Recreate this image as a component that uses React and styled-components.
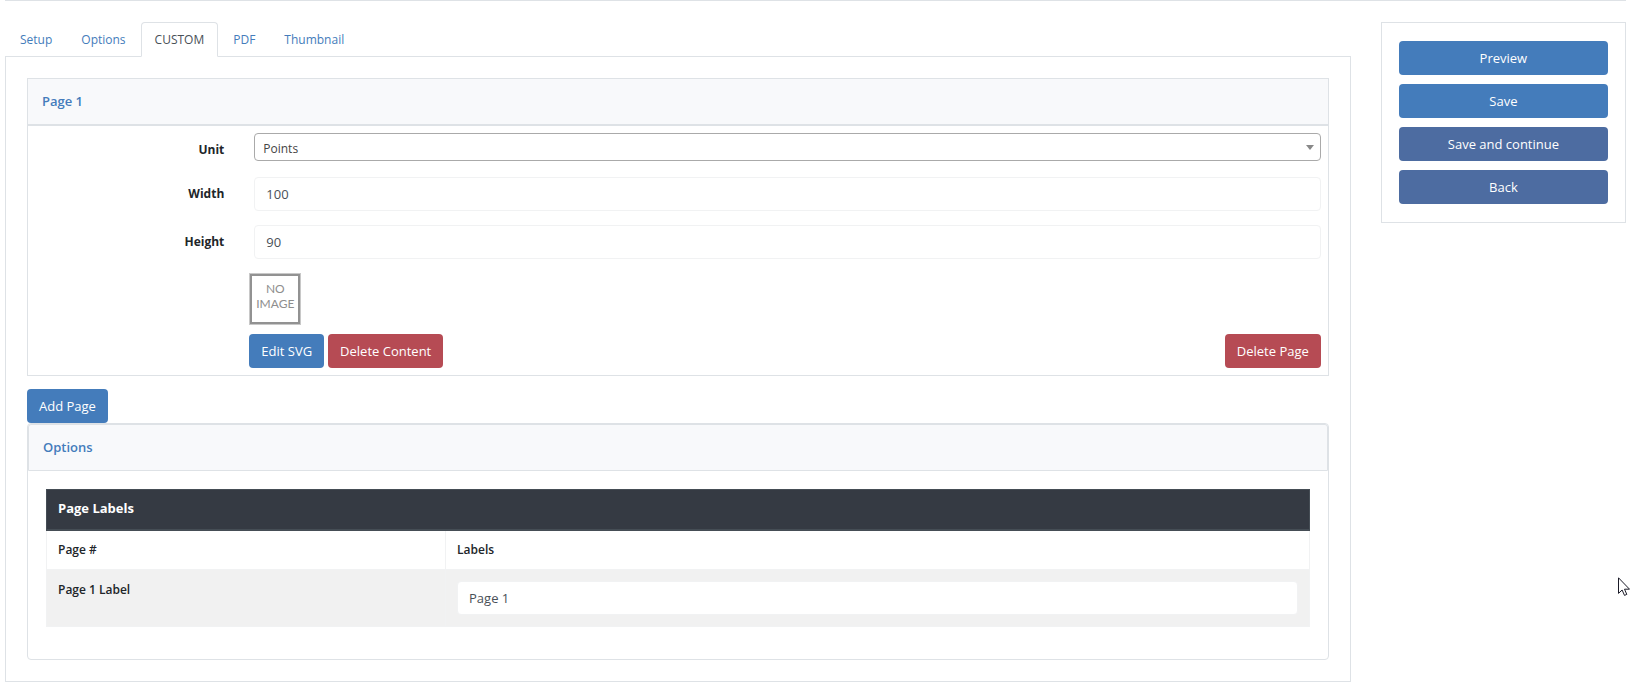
import React, { useState } from "react";
import styled, { createGlobalStyle, css } from "styled-components";

const colors = {
  line: "#dee2e6",
  faint: "#f1f2f3",
  blue: "#447cbb",
  indigo: "#4d6ca1",
  red: "#b64b54",
  ink: "#212529",
};

const GlobalStyle = createGlobalStyle`
  *, *::before, *::after { box-sizing: border-box; }
  body {
    margin: 0;
    background: #fff;
    color: ${colors.ink};
    font-family: "Segoe UI", "Open Sans", "Noto Sans", sans-serif;
    font-size: 12px;
    line-height: 18px;
  }
`;

const Page = styled.div`
  padding: 0 7px 5px 5px;
  overflow-x: hidden;
`;

const Divider = styled.hr`
  margin: 0 0 21px;
  border: 0;
  border-top: 1px solid ${colors.line};
`;

const Columns = styled.div`
  display: flex;
  align-items: flex-start;
  margin: 0 -15px;
`;

const Main = styled.main`
  flex: 0 0 83.3333%;
  min-width: 0;
  padding: 0 15px;
`;

const Side = styled.aside`
  flex: 0 0 16.6667%;
  min-width: 0;
  padding: 0 15px;
`;

const Tabs = styled.nav`
  display: flex;
  gap: 1px;
  height: 34px;
  padding-left: 1px;
`;

const Tab = styled.a`
  padding: 8px 13px 7px;
  border: 1px solid transparent;
  border-radius: 4px 4px 0 0;
  color: ${colors.blue};
  text-decoration: none;
  ${(p) =>
    p.$active &&
    css`
      margin-bottom: -1px;
      z-index: 1;
      border-color: ${colors.line};
      border-bottom-color: #fff;
      background: #fff;
      color: #495057;
    `}
`;

const TabPanel = styled.div`
  padding: 21px;
  border: 1px solid ${colors.line};
`;

const Card = styled.section`
  border: 1px solid ${colors.line};
  border-radius: ${(p) => (p.$rounded ? "4px" : "0")};
`;

const CardTitle = styled.h2`
  margin: 0;
  padding: 13px 14px 14px;
  border: 0 solid ${colors.line};
  border-width: ${(p) => (p.$boxed ? "1px" : "0 0 2px")};
  border-radius: ${(p) => (p.$boxed ? "3px 3px 0 0" : "0")};
  background: #f8f9fb;
  color: ${colors.blue};
  font-size: 13px;
  font-weight: 600;
  line-height: 18px;
`;

const Form = styled.form`
  padding: 7px;
`;

const Field = styled.div`
  display: flex;
  margin: 0 -15px 14px;
`;

const FieldLabel = styled.label`
  flex: 0 0 16.6667%;
  padding: 8px 15px 0;
  font-weight: 700;
  text-align: right;
`;

const FieldControl = styled.div`
  flex: 1;
  min-width: 0;
  padding: 0 15px;
`;

const SelectWrap = styled.div`
  position: relative;
  margin-bottom: 2px;
`;

const Select = styled.select`
  display: block;
  width: 100%;
  height: 28px;
  padding: 3px 28px 0 8px;
  appearance: none;
  border: 1px solid #aaa;
  border-radius: 4px;
  background: #fff;
  color: #444;
  font: inherit;
`;

const Caret = styled.svg`
  position: absolute;
  top: 12px;
  right: 7px;
  pointer-events: none;
`;

const TextInput = styled.input`
  display: block;
  width: 100%;
  height: 34px;
  padding: 0 11px;
  border: 1px solid ${colors.faint};
  border-radius: 4px;
  background: #fff;
  color: #495057;
  font: inherit;
  font-size: 13px;
  font-weight: 400;
`;

const Content = styled.div`
  margin: 0 -15px 0 calc((100% + 30px) / 6 - 15px);
  padding: 0 15px 0 10px;
`;

const NoImage = styled.div`
  display: flex;
  align-items: center;
  justify-content: center;
  width: 52px;
  height: 52px;
  margin-bottom: 9px;
  padding-bottom: 6px;
  border: 1px solid #c8c8c8;
  box-shadow: inset 0 0 0 2px #929292;
  color: #8e8e8e;
  font-family: Lato, sans-serif;
  font-size: 12px;
  line-height: 15px;
  text-align: center;
`;

const Actions = styled.div`
  display: flex;
  gap: 4px;
`;

const Spacer = styled.span`
  flex: 1;
`;

const Button = styled.button`
  display: ${(p) => (p.$block ? "block" : "inline-block")};
  width: ${(p) => (p.$block ? "100%" : "auto")};
  height: 34px;
  padding: 0 12px;
  border: 0;
  border-radius: 4px;
  background: ${(p) => colors[p.$tone || "blue"]};
  color: #fff;
  font: inherit;
  font-size: 13px;
  cursor: pointer;
`;

const AddRow = styled.div`
  display: flex;
  padding-top: 13px;
`;

const CardBody = styled.div`
  padding: 18px 18px 32px;
`;

const Table = styled.table`
  width: 100%;
  border-collapse: collapse;
  table-layout: fixed;
`;

const HeadCell = styled.th`
  height: 40px;
  padding: 0 11px 2px;
  border: 1px solid #454d55;
  border-bottom-width: 2px;
  background: #353a43;
  color: #fff;
  font-size: 13px;
  font-weight: 700;
  text-align: left;
`;

const Cell = styled.td`
  padding: ${(p) => (p.$heading ? "10px 11px" : "11px")};
  border: 1px solid ${colors.faint};
  font-weight: 600;
  text-align: left;
  vertical-align: top;
`;

const Row = styled.tr`
  background: ${(p) => (p.$shaded ? "#f1f1f1" : "#fff")};
`;

const ActionPanel = styled.div`
  display: flex;
  flex-direction: column;
  gap: 9px;
  padding: 18px 17px;
  border: 1px solid ${colors.line};
`;

const Pointer = styled.svg`
  position: absolute;
  top: 577px;
  left: 1618px;
  pointer-events: none;
`;

const tabs = ["Setup", "Options", "CUSTOM", "PDF", "Thumbnail"];

export default function App() {
  const [active, setActive] = useState("CUSTOM");

  return (
    <>
      <GlobalStyle />
      <Page>
        <Divider />
        <Columns>
          <Main>
            <Tabs>
              {tabs.map((tab) => (
                <Tab
                  key={tab}
                  href={`#${tab.toLowerCase()}`}
                  $active={tab === active}
                  onClick={() => setActive(tab)}
                >
                  {tab}
                </Tab>
              ))}
            </Tabs>
            <TabPanel>
              <Card>
                <CardTitle>Page 1</CardTitle>
                <Form onSubmit={(e) => e.preventDefault()}>
                  <Field>
                    <FieldLabel htmlFor="unit">Unit</FieldLabel>
                    <FieldControl>
                      <SelectWrap>
                        <Select id="unit" defaultValue="Points">
                          <option>Points</option>
                        </Select>
                        <Caret width="8" height="5" viewBox="0 0 8 5" aria-hidden="true">
                          <path d="M0 0h8L4 5z" fill="#888" />
                        </Caret>
                      </SelectWrap>
                    </FieldControl>
                  </Field>
                  <Field>
                    <FieldLabel htmlFor="width">Width</FieldLabel>
                    <FieldControl>
                      <TextInput id="width" defaultValue="100" />
                    </FieldControl>
                  </Field>
                  <Field>
                    <FieldLabel htmlFor="height">Height</FieldLabel>
                    <FieldControl>
                      <TextInput id="height" defaultValue="90" />
                    </FieldControl>
                  </Field>
                  <Content>
                    <NoImage>
                      NO
                      <br />
                      IMAGE
                    </NoImage>
                    <Actions>
                      <Button type="button">Edit SVG</Button>
                      <Button type="button" $tone="red">Delete Content</Button>
                      <Spacer />
                      <Button type="button" $tone="red">Delete Page</Button>
                    </Actions>
                  </Content>
                </Form>
              </Card>
              <AddRow>
                <Button type="button">Add Page</Button>
              </AddRow>
              <Card $rounded>
                <CardTitle $boxed>Options</CardTitle>
                <CardBody>
                  <Table>
                    <colgroup>
                      <col width="31.6%" />
                      <col />
                    </colgroup>
                    <thead>
                      <tr>
                        <HeadCell colSpan={2}>Page Labels</HeadCell>
                      </tr>
                    </thead>
                    <tbody>
                      <Row>
                        <Cell as="th" scope="col" $heading>Page #</Cell>
                        <Cell as="th" scope="col" $heading>Labels</Cell>
                      </Row>
                      <Row $shaded>
                        <Cell>
                          <label htmlFor="page-label">Page 1 Label</label>
                        </Cell>
                        <Cell>
                          <TextInput id="page-label" defaultValue="Page 1" />
                        </Cell>
                      </Row>
                    </tbody>
                  </Table>
                </CardBody>
              </Card>
            </TabPanel>
          </Main>
          <Side>
            <ActionPanel>
              <Button type="button" $block>Preview</Button>
              <Button type="button" $block>Save</Button>
              <Button type="button" $block $tone="indigo">Save and continue</Button>
              <Button type="button" $block $tone="indigo">Back</Button>
            </ActionPanel>
          </Side>
        </Columns>
      </Page>
      <Pointer width="12" height="19" viewBox="0 0 12 19" aria-hidden="true">
        <path
          d="M.5.8v15.6l3.6-3.4 2.4 5.4 2.3-1-2.3-5.2h5z"
          fill="#fff"
          stroke="#1b1b28"
        />
      </Pointer>
    </>
  );
}
